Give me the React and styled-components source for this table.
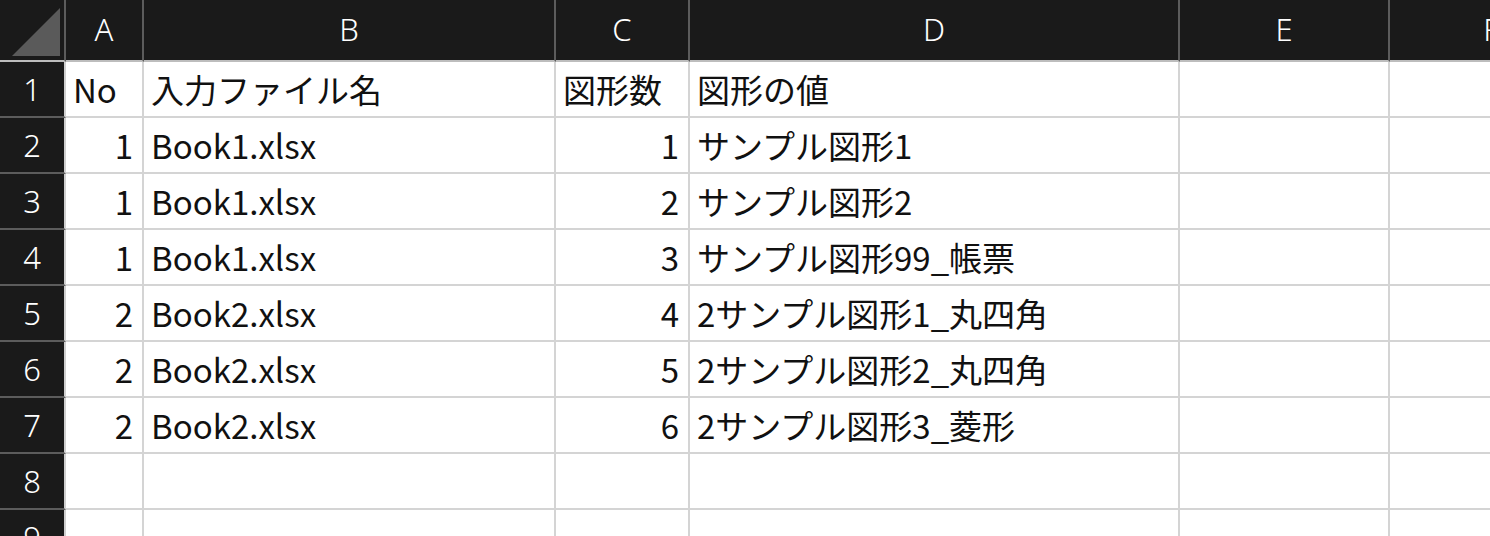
import React from "react";
import styled, { createGlobalStyle } from "styled-components";

const GlobalStyle = createGlobalStyle`
  html, body {
    margin: 0;
    padding: 0;
    background: #ffffff;
    overflow: hidden;
  }
  body {
    font-family: "Noto Sans CJK JP", "Noto Sans", sans-serif;
  }
`;

const COLUMNS = [
  { key: "A", width: 78 },
  { key: "B", width: 412 },
  { key: "C", width: 134 },
  { key: "D", width: 490 },
  { key: "E", width: 210 },
  { key: "F", width: 204 },
];

const rows = [
  ["No", "入力ファイル名", "図形数", "図形の値"],
  [1, "Book1.xlsx", 1, "サンプル図形1"],
  [1, "Book1.xlsx", 2, "サンプル図形2"],
  [1, "Book1.xlsx", 3, "サンプル図形99_帳票"],
  [2, "Book2.xlsx", 4, "2サンプル図形1_丸四角"],
  [2, "Book2.xlsx", 5, "2サンプル図形2_丸四角"],
  [2, "Book2.xlsx", 6, "2サンプル図形3_菱形"],
  [],
  [],
];

const Sheet = styled.div`
  display: grid;
  grid-template-columns: 66px ${COLUMNS.map((c) => `${c.width}px`).join(" ")};
  grid-auto-rows: 56px;
  grid-template-rows: 62px;
  width: 1490px;
  height: 536px;
  overflow: hidden;
  font-size: 33px;
  color: #111;
`;

const Corner = styled.div`
  background: #1a1a1a;
  border-right: 2px solid #5c5c5c;
  border-bottom: 2px solid #bdbdbd;
  display: flex;
  align-items: flex-end;
  justify-content: flex-end;
  padding: 0 4px 4px 0;
`;

const ColHead = styled.div`
  background: #1a1a1a;
  color: #fff;
  border-right: 2px solid #5c5c5c;
  border-bottom: 2px solid #bdbdbd;
  display: flex;
  align-items: center;
  justify-content: center;
  font-family: "Noto Sans", sans-serif;
  font-weight: 300;
  font-size: 31px;
  white-space: nowrap;
  overflow: hidden;
  box-sizing: border-box;
  padding-bottom: 2px;
`;

const RowHead = styled.div`
  background: #1a1a1a;
  color: #fff;
  border-right: 2px solid #cfcfcf;
  border-bottom: 2px solid #5c5c5c;
  display: flex;
  align-items: center;
  justify-content: center;
  font-family: "Noto Sans", sans-serif;
  font-weight: 300;
  font-size: 31px;
`;

const Cell = styled.div`
  border-right: 2px solid #d4d4d4;
  border-bottom: 2px solid #d4d4d4;
  display: flex;
  align-items: center;
  justify-content: ${(p) => (p.$num ? "flex-end" : "flex-start")};
  padding: 0 ${(p) => (p.$num ? "9px" : "0")} 0 ${(p) => (p.$num ? "0" : "7px")};
  white-space: nowrap;
  overflow: hidden;
`;

const App = () => {
  return (
    <>
      <GlobalStyle />
      <Sheet>
        <Corner>
          <svg width="48" height="48" viewBox="0 0 48 48">
            <polygon points="0,48 48,48 48,0" fill="#5a5a5a" />
          </svg>
        </Corner>
        {COLUMNS.map((c) => (
          <ColHead key={c.key}>{c.key}</ColHead>
        ))}
        {rows.map((row, r) => (
          <React.Fragment key={r}>
            <RowHead>{r + 1}</RowHead>
            {COLUMNS.map((c, i) => {
              const v = row[i];
              return (
                <Cell key={c.key} $num={typeof v === "number"}>
                  {v}
                </Cell>
              );
            })}
          </React.Fragment>
        ))}
      </Sheet>
    </>
  );
};

export default App;
